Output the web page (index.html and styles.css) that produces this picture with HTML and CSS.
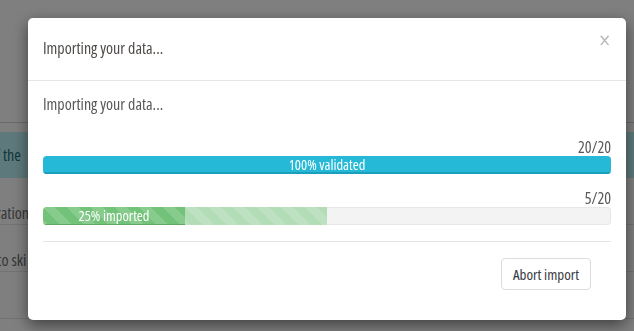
FILE: index.html
```html
<!DOCTYPE html>
<html>
<head>
<meta charset="utf-8">
<link rel="stylesheet" href="styles.css">
</head>
<body>
<div class="page">
  <div class="page-top"></div>
  <div class="table">
    <div class="row row-sel"><span class="cell">Fields of the</span></div>
    <div class="row"><span class="cell">Configuration</span></div>
    <div class="row"><span class="cell">Choose to ski</span></div>
    <div class="row"><span class="cell"></span></div>
  </div>
</div>
<div class="overlay"></div>
<div class="modal-wrap">
  <div class="modal">
    <div class="modal-header">
      <h4 class="modal-title">Importing your data...</h4>
      <span class="close">×</span>
    </div>
    <div class="modal-body">
      <p class="intro">Importing your data...</p>
      <div class="count">20/20</div>
      <div class="progress">
        <div class="bar bar-info" style="width:100%">100% validated</div>
      </div>
      <div class="count">5/20</div>
      <div class="progress">
        <div class="bar bar-success striped" style="width:25%">25% imported</div>
        <div class="bar bar-light striped" style="width:25%"></div>
      </div>
    </div>
    <div class="modal-footer">
      <button class="btn">Abort import</button>
    </div>
  </div>
</div>
</body>
</html>
```
FILE: styles.css
```css
* { box-sizing: border-box; }
html, body { margin: 0; padding: 0; }
body {
  width: 634px;
  height: 331px;
  overflow: hidden;
  background: #fff;
  font-family: "Open Sans", "DejaVu Sans Condensed", sans-serif;
  font-stretch: 75%;
  font-size: 14px;
  color: #363a41;
}
.page { width: 634px; height: 331px; overflow: hidden; }
.page-top { height: 123px; border-bottom: 1px solid #d4d4d4; }
.table { margin-top: 9px; width: 634px; }
.row {
  display: flex;
  height: 47px;
  padding-top: 26px;
  line-height: 18px;
  border-bottom: 1px solid #e6e6e6;
  font-size: 16px;
  color: #6c6c6c;
}
.row-sel {
  height: 46px;
  padding-top: 0;
  align-items: center;
  background: #bdf3f6;
  color: #1b6f7a;
  border-bottom: none;
}
.cell { margin-left: -46px; white-space: nowrap; }
.overlay {
  position: fixed; inset: 0;
  background: rgba(0, 0, 0, 0.5);
}
.modal-wrap {
  position: fixed; inset: 0;
  padding: 18px 8px 0 28px;
}
.modal {
  width: 598px;
  height: 302px;
  background: #fff;
  border-radius: 5px;
  box-shadow: 0 5px 15px rgba(0, 0, 0, 0.5);
  display: flex;
  flex-direction: column;
}
.modal-header {
  display: flex;
  justify-content: space-between;
  align-items: flex-start;
  padding: 19px 15px 19px 15px;
  border-bottom: 1px solid #e5e5e5;
  height: 63px;
}
.modal-title {
  margin: 0;
  font-size: 16px;
  font-weight: normal;
  line-height: 22px;
  color: #4f4b48;
}
.close {
  color: #b8b8b8;
  font-size: 17px;
  line-height: 1;
  margin-top: -5px;
  font-family: "DejaVu Sans", sans-serif;
}
.modal-body { padding: 14px 15px 0 15px; }
.intro { margin: 0 0 25px 0; line-height: 18px; color: #58585a; font-size: 16px; }
.count {
  text-align: right;
  line-height: 18px;
  color: #58585a;
  font-size: 16px;
}
.progress {
  display: flex;
  height: 18px;
  background: #f3f3f3;
  border-radius: 4px;
  overflow: hidden;
  box-shadow: inset 0 0 0 1px #e8e8e8;
  margin-bottom: 15px;
}
.bar {
  height: 100%;
  color: #fff;
  font-size: 14.5px;
  line-height: 18px;
  text-align: center;
  white-space: nowrap;
}
.bar-info { background: #25b9d7; box-shadow: inset 0 -2px 0 #1c9fbb; }
.bar-success { background-color: #72c279; box-shadow: inset 0 -1px 0 #5fa865; }
.bar-light { background-color: #b3ddb6; }
.striped {
  background-image: linear-gradient(45deg,
    rgba(255,255,255,.15) 25%, transparent 25%, transparent 50%,
    rgba(255,255,255,.15) 50%, rgba(255,255,255,.15) 75%, transparent 75%, transparent);
  background-size: 24px 24px;
}
.modal-footer {
  margin: 1px 15px 0 15px;
  border-top: 1px solid #e5e5e5;
  padding: 16px 20px 0 0;
  display: flex;
  justify-content: flex-end;
}
.btn {
  font-family: inherit;
  font-stretch: 75%;
  font-size: 15px;
  color: #363a41;
  background: #fff;
  border: 1px solid #dcdcdc;
  border-radius: 4px;
  width: 90px;
  height: 32px;
  padding: 0;
}
```
